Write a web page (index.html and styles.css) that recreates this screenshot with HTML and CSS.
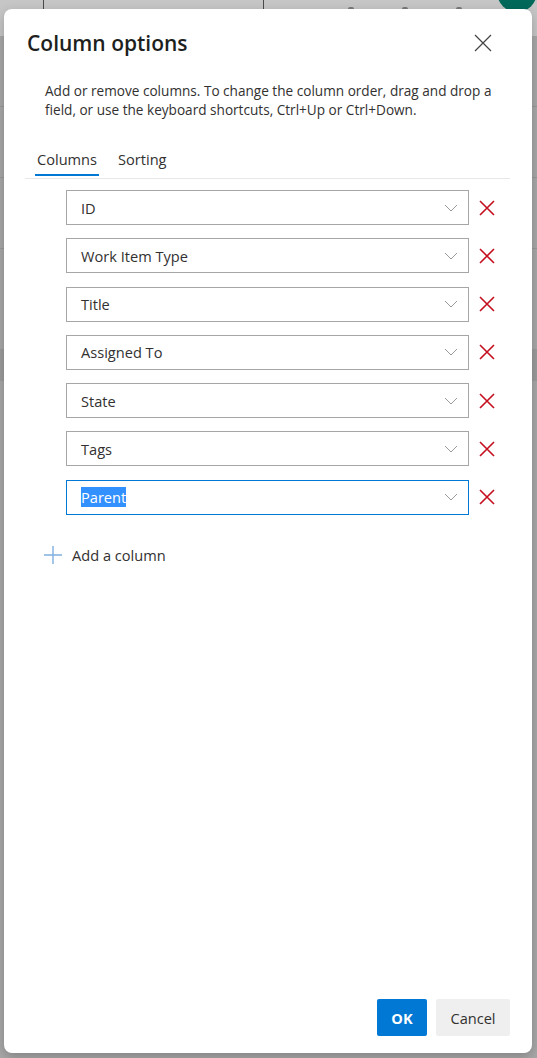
FILE: index.html
```html
<!DOCTYPE html>
<html lang="en">
<head>
  <meta charset="UTF-8" />
  <meta name="viewport" content="width=device-width, initial-scale=1.0"/>
  <title>Column options</title>
  <link rel="stylesheet" href="styles.css">
</head>
<body>
  <div class="page">
    <div class="topbar">
      <div class="search-box"></div>
      <span class="topbar-icon"></span>
      <span class="topbar-icon"></span>
      <span class="topbar-icon"></span>
      <span class="avatar"></span>
    </div>
    <div class="page-lines">
      <div class="page-line"></div>
      <div class="page-line"></div>
      <div class="page-line"></div>
      <div class="page-band"></div>
    </div>
  </div>

  <div class="overlay">
    <div class="dialog">
      <div class="dialog-header">
        <h1>Column options</h1>
        <button class="close" aria-label="Close">
          <svg width="18" height="18" viewBox="0 0 18 18"><path d="M1 1L17 17M17 1L1 17" stroke="#444" stroke-width="1.2" fill="none"/></svg>
        </button>
      </div>

      <p class="description">Add or remove columns. To change the column order, drag and drop a field, or use the keyboard shortcuts, Ctrl+Up or Ctrl+Down.</p>

      <div class="tabs">
        <div class="tab selected">Columns</div>
        <div class="tab">Sorting</div>
      </div>

      <div class="columns">
        <div class="column-row">
          <div class="field"><span>ID</span><svg class="chevron" width="14" height="8" viewBox="0 0 14 8"><path d="M1 1L7 7L13 1" stroke="#999" stroke-width="1" fill="none"/></svg></div>
          <button class="remove"><svg width="16" height="16" viewBox="0 0 16 16"><path d="M1 1L15 15M15 1L1 15" stroke="#c50f1f" stroke-width="1.6" fill="none"/></svg></button>
        </div>
        <div class="column-row">
          <div class="field"><span>Work Item Type</span><svg class="chevron" width="14" height="8" viewBox="0 0 14 8"><path d="M1 1L7 7L13 1" stroke="#999" stroke-width="1" fill="none"/></svg></div>
          <button class="remove"><svg width="16" height="16" viewBox="0 0 16 16"><path d="M1 1L15 15M15 1L1 15" stroke="#c50f1f" stroke-width="1.6" fill="none"/></svg></button>
        </div>
        <div class="column-row">
          <div class="field"><span>Title</span><svg class="chevron" width="14" height="8" viewBox="0 0 14 8"><path d="M1 1L7 7L13 1" stroke="#999" stroke-width="1" fill="none"/></svg></div>
          <button class="remove"><svg width="16" height="16" viewBox="0 0 16 16"><path d="M1 1L15 15M15 1L1 15" stroke="#c50f1f" stroke-width="1.6" fill="none"/></svg></button>
        </div>
        <div class="column-row">
          <div class="field"><span>Assigned To</span><svg class="chevron" width="14" height="8" viewBox="0 0 14 8"><path d="M1 1L7 7L13 1" stroke="#999" stroke-width="1" fill="none"/></svg></div>
          <button class="remove"><svg width="16" height="16" viewBox="0 0 16 16"><path d="M1 1L15 15M15 1L1 15" stroke="#c50f1f" stroke-width="1.6" fill="none"/></svg></button>
        </div>
        <div class="column-row">
          <div class="field"><span>State</span><svg class="chevron" width="14" height="8" viewBox="0 0 14 8"><path d="M1 1L7 7L13 1" stroke="#999" stroke-width="1" fill="none"/></svg></div>
          <button class="remove"><svg width="16" height="16" viewBox="0 0 16 16"><path d="M1 1L15 15M15 1L1 15" stroke="#c50f1f" stroke-width="1.6" fill="none"/></svg></button>
        </div>
        <div class="column-row">
          <div class="field"><span>Tags</span><svg class="chevron" width="14" height="8" viewBox="0 0 14 8"><path d="M1 1L7 7L13 1" stroke="#999" stroke-width="1" fill="none"/></svg></div>
          <button class="remove"><svg width="16" height="16" viewBox="0 0 16 16"><path d="M1 1L15 15M15 1L1 15" stroke="#c50f1f" stroke-width="1.6" fill="none"/></svg></button>
        </div>
        <div class="column-row">
          <div class="field focused"><span class="selected-text">Parent</span><svg class="chevron" width="14" height="8" viewBox="0 0 14 8"><path d="M1 1L7 7L13 1" stroke="#999" stroke-width="1" fill="none"/></svg></div>
          <button class="remove"><svg width="16" height="16" viewBox="0 0 16 16"><path d="M1 1L15 15M15 1L1 15" stroke="#c50f1f" stroke-width="1.6" fill="none"/></svg></button>
        </div>
      </div>

      <button class="add-column">
        <svg width="18" height="18" viewBox="0 0 18 18"><path d="M9 0V18M0 9H18" stroke="#7fb0e0" stroke-width="1.4" fill="none"/></svg>
        <span>Add a column</span>
      </button>

      <div class="dialog-footer">
        <button class="btn primary">OK</button>
        <button class="btn">Cancel</button>
      </div>
    </div>
  </div>
</body>
</html>
```

FILE: styles.css
```css
body {
  margin: 0;
  height: 1058px;
  overflow: hidden;
  background-color: #a8a8a8;
  font-family: 'Open Sans', 'Noto Sans', sans-serif;
  color: #323130;
}

button {
  font-family: inherit;
  border: none;
  background: none;
  padding: 0;
  cursor: pointer;
}

/* page behind the dimmed overlay */
.topbar {
  height: 36px;
  background-color: #c6c6c6;
  display: flex;
  align-items: flex-start;
  position: relative;
}

.search-box {
  margin-left: 43px;
  width: 219px;
  height: 10px;
  border: 1px solid #4a4a4a;
  border-top: none;
  border-radius: 0 0 2px 2px;
}

.topbar-icon {
  width: 6px;
  height: 4px;
  margin-top: 7px;
  background-color: #7a7a7a;
  border-radius: 2px;
  margin-left: 48px;
}

.topbar-icon:first-of-type {
  margin-left: 84px;
}

.avatar {
  position: absolute;
  left: 497px;
  top: -28px;
  width: 40px;
  height: 40px;
  border-radius: 50%;
  background-color: #02685a;
}

.page-line {
  height: 1px;
  margin-top: 70px;
  background-color: #999;
}

.page-band {
  height: 32px;
  margin-top: 100px;
  background-color: #9c9c9c;
}

/* dialog */
.overlay {
  position: absolute;
  inset: 0;
}

.dialog {
  position: absolute;
  left: 4px;
  top: 9px;
  width: 528px;
  height: 1044px;
  background-color: #fff;
  border-radius: 8px;
  box-shadow: 0 4px 12px rgba(0,0,0,0.22);
  display: flex;
  flex-direction: column;
  box-sizing: border-box;
  padding: 0 22px 17px 21px;
}

.dialog-header {
  display: flex;
  align-items: center;
  justify-content: space-between;
  padding-top: 20px;
  padding-left: 2px;
}

.dialog-header h1 {
  margin: 0;
  font-size: 21px;
  line-height: 28px;
  font-weight: 600;
  color: #201f1e;
}

.close {
  width: 18px;
  height: 18px;
  margin-right: 18px;
  display: flex;
}

.description {
  margin: 24px 0 0 20px;
  font-size: 13.6px;
  line-height: 19px;
  color: #323130;
  padding-right: 10px;
}

.tabs {
  display: flex;
  align-items: flex-start;
  margin-top: 27px;
  border-bottom: 1px solid #e8e8e8;
  padding-left: 10px;
}

.tab {
  font-size: 14.6px;
  line-height: 20px;
  padding: 3px 2px 9px;
  margin-right: 17px;
  color: #323130;
}

.tab.selected {
  border-bottom: 2px solid #0078d4;
  padding-bottom: 5px;
  margin-bottom: 2px;
}

.columns {
  display: flex;
  flex-direction: column;
  gap: 13.3px;
  margin: 11px 0 0 41px;
}

.column-row {
  display: flex;
  align-items: center;
}

.field {
  width: 403px;
  height: 35px;
  box-sizing: border-box;
  border: 1px solid #a6a6a6;
  display: flex;
  align-items: center;
  justify-content: space-between;
  padding: 0 10px 0 14px;
  font-size: 14.6px;
  color: #323130;
}

.field.focused {
  border-color: #0078d4;
}

.selected-text {
  background-color: #3390ff;
  color: #fff;
}

.remove {
  margin-left: 10px;
  width: 16px;
  height: 16px;
  display: flex;
}

.add-column {
  display: flex;
  align-items: center;
  gap: 10px;
  margin: 30px 0 0 19px;
  font-size: 14.6px;
  color: #323130;
  align-self: flex-start;
}

.dialog-footer {
  margin-top: auto;
  display: flex;
  justify-content: flex-end;
  gap: 9px;
}

.btn {
  width: 74px;
  height: 37px;
  font-size: 14.6px;
  background-color: #efefef;
  color: #323130;
  border-radius: 2px;
}

.btn.primary {
  width: 50px;
  background-color: #0078d4;
  color: #fff;
  font-weight: 700;
}
```
